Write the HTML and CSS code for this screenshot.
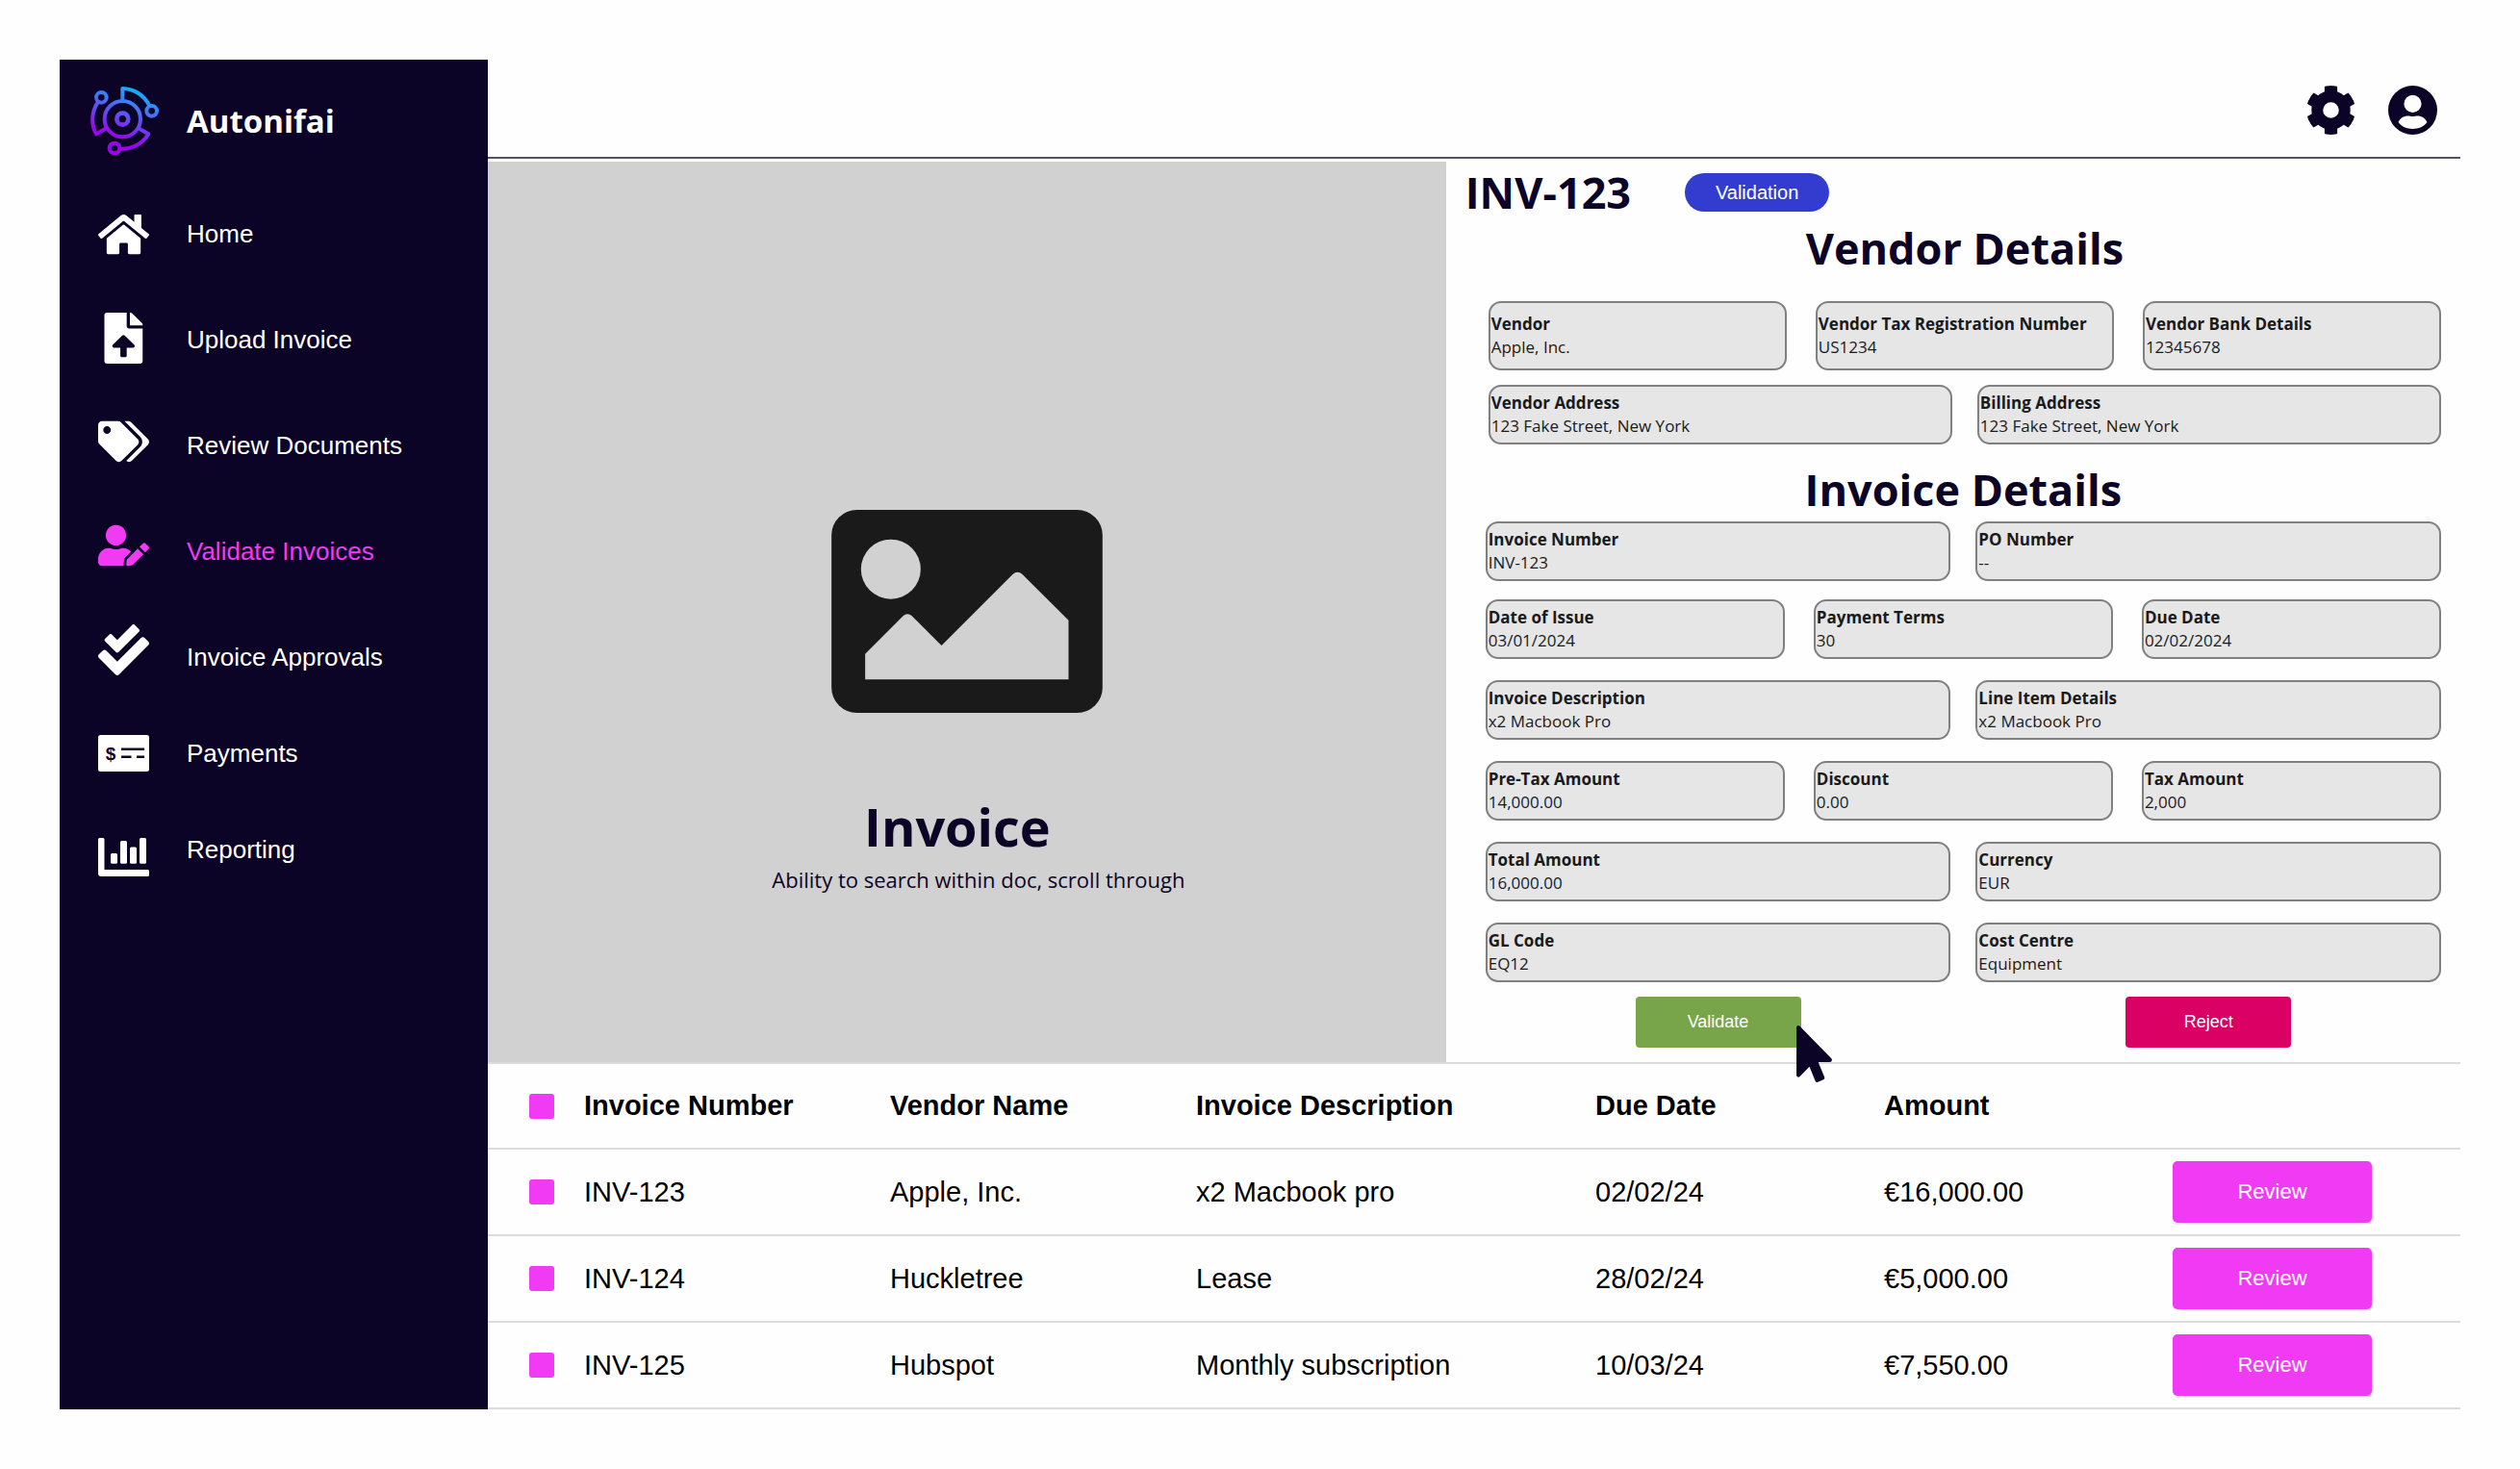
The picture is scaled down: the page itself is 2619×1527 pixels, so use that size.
FILE: index.html
```html
<!DOCTYPE html>
<html lang="en">
<head>
<meta charset="utf-8">
<meta name="viewport" content="width=device-width, initial-scale=1">
<title>Autonifai – Validate Invoices</title>
<link rel="stylesheet" href="styles.css">
</head>
<body>
<div class="shell">
  <aside class="sidebar">
    <div class="brand">
      <svg class="brand-logo" viewBox="0 0 213 213" aria-hidden="true">
        <defs>
          <linearGradient id="brand-gradient" gradientUnits="userSpaceOnUse" x1="140" y1="10" x2="85" y2="160">
            <stop offset="0" stop-color="#16aefb"/>
            <stop offset="1" stop-color="#9a05ea"/>
          </linearGradient>
        </defs>
        <g fill="none" stroke="url(#brand-gradient)" stroke-width="12" stroke-linejoin="round">
          <circle cx="100" cy="101" r="56"/>
          <circle cx="100" cy="101" r="18" stroke-width="14"/>
          <circle cx="191" cy="76" r="16"/>
          <circle cx="34" cy="34" r="16"/>
          <circle cx="75" cy="192" r="16"/>
          <path d="M100 44V6A95 95 0 0 1 184 60"/>
          <path d="M24 48A95 95 0 0 0 18 148L50 130"/>
          <path d="M152 131L181 148A95 95 0 0 1 91 194"/>
        </g>
      </svg>
      <span class="brand-name">Autonifai</span>
    </div>
    <nav aria-label="Main">
      <ul class="nav-list">
        <li><a class="nav-link" href="#">
          <svg class="nav-icon" viewBox="0 0 53 66" aria-hidden="true"><path transform="translate(0 10.1) scale(.092)" d="M280.37 148.26L96 300.11V464a16 16 0 0 0 16 16l112.06-.29a16 16 0 0 0 15.92-16V368a16 16 0 0 1 16-16h64a16 16 0 0 1 16 16v95.64a16 16 0 0 0 16 16.05L464 480a16 16 0 0 0 16-16V300L295.67 148.26a12.19 12.19 0 0 0-15.3 0zM571.6 251.47L488 182.56V38a6 6 0 0 0-6-6h-68a6 6 0 0 0-6 6v78.66L318.47 43a48 48 0 0 0-61 0L4.34 251.47a12 12 0 0 0-1.6 16.9l25.5 31A12 12 0 0 0 45.15 301l235.22-193.74a12.19 12.19 0 0 1 15.3 0L530.9 301a12 12 0 0 0 16.9-1.6l25.5-31a12 12 0 0 0-1.7-16.93z"/></svg>
          <span>Home</span></a></li>
        <li><a class="nav-link" href="#">
          <svg class="nav-icon" viewBox="0 0 53 66" aria-hidden="true"><path transform="translate(6.5 5) scale(.1035)" d="M224 136V0H24C10.7 0 0 10.7 0 24v464c0 13.3 10.7 24 24 24h336c13.3 0 24-10.7 24-24V160H248c-13.2 0-24-10.8-24-24zm65.18 216.01H224v80c0 8.84-7.16 16-16 16h-32c-8.84 0-16-7.16-16-16v-80H94.82c-14.28 0-21.41-17.29-11.27-27.36l96.42-95.7c6.65-6.61 17.39-6.61 24.04 0l96.42 95.7c10.15 10.07 3.03 27.36-11.25 27.36zM377 105L279.1 7c-4.5-4.5-10.6-7-17-7H256v128h128v-6.1c0-6.3-2.5-12.4-7-16.9z"/></svg>
          <span>Upload Invoice</span></a></li>
        <li><a class="nav-link" href="#">
          <svg class="nav-icon" viewBox="0 0 53 66" aria-hidden="true"><path transform="translate(0 7.8) scale(.0828)" d="M497.941 225.941L286.059 14.059A48 48 0 0 0 252.118 0H48C21.49 0 0 21.49 0 48v204.118a48 48 0 0 0 14.059 33.941l211.882 211.882c18.744 18.745 49.136 18.746 67.882 0l204.118-204.118c18.745-18.745 18.745-49.137 0-67.882zM112 160c-26.51 0-48-21.49-48-48s21.49-48 48-48 48 21.49 48 48-21.49 48-48 48zm513.941 133.823L421.823 497.941c-18.745 18.745-49.137 18.745-67.882 0l-.36-.36L527.64 323.522c16.999-16.999 26.36-39.6 26.36-63.64s-9.362-46.641-26.36-63.64L331.397 0h48.721a48 48 0 0 1 33.941 14.059l211.882 211.882c18.745 18.745 18.745 49.137 0 67.882z"/></svg>
          <span>Review Documents</span></a></li>
        <li><a class="nav-link nav-link-active" href="#" aria-current="page">
          <svg class="nav-icon" viewBox="0 0 53 66" aria-hidden="true"><path transform="translate(0 5.8) scale(.0828)" d="M224 256c70.7 0 128-57.3 128-128S294.7 0 224 0 96 57.3 96 128s57.3 128 128 128zm89.6 32h-16.7c-22.2 10.2-46.9 16-72.9 16s-50.6-5.8-72.9-16h-16.7C60.2 288 0 348.2 0 422.4V464c0 26.5 21.5 48 48 48h274.9c-2.4-6.8-3.4-14-2.6-21.3l6.8-60.9 1.2-11.1 7.9-7.9 77.3-77.3c-24.5-27.7-60-45.5-99.9-45.5zm45.3 145.3l-6.8 61c-1.1 10.2 7.5 18.8 17.6 17.6l60.9-6.8 137.9-137.9-71.7-71.7-137.9 137.8zM633 268.9L595.1 231c-9.3-9.3-24.5-9.3-33.8 0l-37.8 37.8-4.1 4.1 71.8 71.7 41.8-41.8c9.3-9.4 9.3-24.5 0-33.9z"/></svg>
          <span>Validate Invoices</span></a></li>
        <li><a class="nav-link" href="#">
          <svg class="nav-icon" viewBox="0 0 53 66" aria-hidden="true"><path transform="translate(0 -1) scale(.1035)" d="M505 174.8l-39.6-39.6c-9.4-9.4-24.6-9.4-33.9 0L192 374.7 80.6 263.2c-9.4-9.4-24.6-9.4-33.9 0L7 302.9c-9.4 9.4-9.4 24.6 0 34L175 505c9.4 9.4 24.6 9.4 33.9 0l296-296.2c9.4-9.5 9.4-24.7.1-34zm-324.3 106c6.2 6.3 16.4 6.3 22.6 0l208-208.2c6.2-6.3 6.2-16.4 0-22.6L366.1 4.7c-6.2-6.3-16.4-6.3-22.6 0L192 156.2l-55.4-55.5c-6.2-6.3-16.4-6.3-22.6 0L68.7 146c-6.2 6.3-6.2 16.4 0 22.6l112 112.2z"/></svg>
          <span>Invoice Approvals</span></a></li>
        <li class="nav-item-tight"><a class="nav-link" href="#">
          <svg class="nav-icon" viewBox="0 0 53 66" aria-hidden="true"><rect y="14" width="53" height="38" rx="2.5"/><path d="M24 28.7h24M24 36.7h10.5M40 36.7h8" fill="none" stroke="#0c0427" stroke-width="2.6"/><text class="nav-icon-sign" x="13" y="39.5" text-anchor="middle">$</text></svg>
          <span>Payments</span></a></li>
        <li class="nav-item-tight"><a class="nav-link" href="#">
          <svg class="nav-icon" viewBox="0 0 53 66" aria-hidden="true"><path d="M1.5 21H5a1.5 1.5 0 0 1 1.500 1.500V54h45a1.500 1.500 0 0 1 1.500 1.500v4a1.500 1.500 0 0 1-1.500 1.500H3a3 3 0 0 1-3-3V22.500A1.500 1.500 0 0 1 1.500 21z"/><rect x="13" y="37" width="7" height="10.700" rx="1.500"/><rect x="23" y="24" width="7" height="23.700" rx="1.500"/><rect x="33" y="30.500" width="7" height="17.200" rx="1.500"/><rect x="43" y="21" width="7" height="26.700" rx="1.500"/></svg>
          <span>Reporting</span></a></li>
      </ul>
    </nav>
  </aside>

  <main class="main">
    <header class="topbar">
      <button class="icon-button" type="button" aria-label="Settings">
        <svg viewBox="0 0 154 154" aria-hidden="true">
          <defs>
            <clipPath id="gear-rim"><circle cx="77" cy="77" r="77"/></clipPath>
          </defs>
          <g clip-path="url(#gear-rim)">
            <circle cx="77" cy="77" r="43" fill="none" stroke="currentColor" stroke-width="36"/>
            <path fill="currentColor" d="M57 0H97V40H57zM57 114H97V154H57z"/>
            <path fill="currentColor" transform="rotate(60 77 77)" d="M57 0H97V40H57zM57 114H97V154H57z"/>
            <path fill="currentColor" transform="rotate(120 77 77)" d="M57 0H97V40H57zM57 114H97V154H57z"/>
          </g>
        </svg>
      </button>
      <button class="icon-button" type="button" aria-label="Account">
        <svg viewBox="0 0 154 154" aria-hidden="true">
          <path fill="currentColor" fill-rule="evenodd" d="M77 0a77 77 0 1 1 0 154a77 77 0 1 1 0-154zM77 29.500a27.500 27.500 0 1 0 0 55a27.500 27.500 0 1 0 0-55zM32 115C36 103 49 95 62 95C68 95 71 97 77 97C83 97 86 95 92 95C105 95 118 103 122 115C112 129 96 136 77 136C58 136 42 129 32 115z"/>
        </svg>
      </button>
    </header>

    <div class="workspace">
      <section class="preview" aria-label="Invoice document">
        <svg class="preview-picture" viewBox="0 0 845 633" aria-hidden="true">
          <rect width="845" height="633" rx="79" fill="#1a1a1a"/>
          <circle cx="185" cy="185" r="93" fill="#d1d1d1"/>
          <path fill="#d1d1d1" d="M105 449L224 330Q237 320 250 330L343 423L565 201Q580 187 595 201L739 344V529H105z"/>
        </svg>
        <h2 class="preview-title">Invoice</h2>
        <p class="preview-note">Ability to search within doc, scroll through</p>
      </section>

      <form class="details">
        <div class="details-head">
          <h1 class="heading">INV-123</h1>
          <span class="status">Validation</span>
        </div>

        <section class="vendor">
          <h2 class="heading heading-center">Vendor Details</h2>
          <div class="fields fields-three">
            <label class="field field-tall"><span>Vendor</span><input type="text" value="Apple, Inc." readonly></label>
            <label class="field field-tall"><span>Vendor Tax Registration Number</span><input type="text" value="US1234" readonly></label>
            <label class="field field-tall"><span>Vendor Bank Details</span><input type="text" value="12345678" readonly></label>
          </div>
          <div class="fields fields-two">
            <label class="field"><span>Vendor Address</span><input type="text" value="123 Fake Street, New York" readonly></label>
            <label class="field"><span>Billing Address</span><input type="text" value="123 Fake Street, New York" readonly></label>
          </div>
        </section>

        <section class="invoice">
          <h2 class="heading heading-center">Invoice Details</h2>
          <div class="fields fields-two">
            <label class="field"><span>Invoice Number</span><input type="text" value="INV-123" readonly></label>
            <label class="field"><span>PO Number</span><input type="text" value="--" readonly></label>
          </div>
          <div class="invoice-rows">
            <div class="fields fields-three">
              <label class="field"><span>Date of Issue</span><input type="text" value="03/01/2024" readonly></label>
              <label class="field"><span>Payment Terms</span><input type="text" value="30" readonly></label>
              <label class="field"><span>Due Date</span><input type="text" value="02/02/2024" readonly></label>
            </div>
            <div class="fields fields-two">
              <label class="field"><span>Invoice Description</span><input type="text" value="x2 Macbook Pro" readonly></label>
              <label class="field"><span>Line Item Details</span><input type="text" value="x2 Macbook Pro" readonly></label>
            </div>
            <div class="fields fields-three">
              <label class="field"><span>Pre-Tax Amount</span><input type="text" value="14,000.00" readonly></label>
              <label class="field"><span>Discount</span><input type="text" value="0.00" readonly></label>
              <label class="field"><span>Tax Amount</span><input type="text" value="2,000" readonly></label>
            </div>
            <div class="fields fields-two">
              <label class="field"><span>Total Amount</span><input type="text" value="16,000.00" readonly></label>
              <label class="field"><span>Currency</span><input type="text" value="EUR" readonly></label>
            </div>
            <div class="fields fields-two">
              <label class="field"><span>GL Code</span><input type="text" value="EQ12" readonly></label>
              <label class="field"><span>Cost Centre</span><input type="text" value="Equipment" readonly></label>
            </div>
          </div>
          <div class="actions">
            <div class="action">
              <button class="decision decision-validate" type="button">Validate</button>
              <svg class="cursor" viewBox="0 0 320 512" aria-hidden="true"><path fill="#0c0427" d="M302.189 329.126H196.105l55.831 135.993c3.889 9.428-.555 19.999-9.444 23.999l-49.165 21.427c-9.165 4-19.443-.571-23.332-9.714l-53.053-129.136-86.664 89.138C18.729 472.71 0 463.554 0 447.977V18.299C0 1.899 19.921-6.096 30.277 5.443l284.412 292.542c11.472 11.179 3.007 31.141-12.5 31.141z"/></svg>
            </div>
            <div class="action">
              <button class="decision decision-reject" type="button">Reject</button>
            </div>
          </div>
        </section>
      </form>
    </div>

    <table class="invoices">
      <colgroup>
        <col class="col-check"><col class="col-number"><col class="col-vendor"><col class="col-description"><col class="col-date"><col class="col-amount"><col>
      </colgroup>
      <thead>
        <tr>
          <th class="check-cell"><input class="check" type="checkbox" aria-label="Select all invoices"></th>
          <th scope="col">Invoice Number</th>
          <th scope="col">Vendor Name</th>
          <th scope="col">Invoice Description</th>
          <th scope="col">Due Date</th>
          <th scope="col">Amount</th>
          <td></td>
        </tr>
      </thead>
      <tbody>
        <tr>
          <td class="check-cell"><input class="check" type="checkbox" aria-label="Select INV-123"></td>
          <td>INV-123</td><td>Apple, Inc.</td><td>x2 Macbook pro</td><td>02/02/24</td><td>€16,000.00</td>
          <td><button class="review" type="button">Review</button></td>
        </tr>
        <tr>
          <td class="check-cell"><input class="check" type="checkbox" aria-label="Select INV-124"></td>
          <td>INV-124</td><td>Huckletree</td><td>Lease</td><td>28/02/24</td><td>€5,000.00</td>
          <td><button class="review" type="button">Review</button></td>
        </tr>
        <tr>
          <td class="check-cell"><input class="check" type="checkbox" aria-label="Select INV-125"></td>
          <td>INV-125</td><td>Hubspot</td><td>Monthly subscription</td><td>10/03/24</td><td>€7,550.00</td>
          <td><button class="review" type="button">Review</button></td>
        </tr>
      </tbody>
    </table>
  </main>
</div>
</body>
</html>
```

FILE: styles.css
```css
:root {
  --navy: #0c0427;
  --pink: #f13af4;
  --line: #dcdcdc;
  --panel: #d1d1d1;
  --ui: "Liberation Sans", Arial, sans-serif;
  --display: "Open Sans", "Noto Sans", sans-serif;
}

* {
  box-sizing: border-box;
}

body {
  margin: 0;
  padding: 62px;
  background: #fefefe;
  font-family: var(--ui);
  color: #000;
}

h1, h2, p, ul {
  margin: 0;
  padding: 0;
}

button, input {
  font: inherit;
}

button {
  padding: 0;
  border: 0;
  cursor: pointer;
}

.shell {
  display: grid;
  grid-template-columns: 445px minmax(0, 1fr);
}

/* Sidebar */

.sidebar {
  background: var(--navy);
  color: #fff;
}

.brand {
  display: flex;
  align-items: center;
  gap: 29px;
  padding: 28px 32px 49px;
}

.brand-logo {
  width: 71px;
  height: 71px;
}

.brand-name {
  font: bold 33px/48px var(--display);
}

.nav-list {
  list-style: none;
  padding: 0 40px;
}

.nav-list li + li {
  margin-top: 44px;
}

.nav-list .nav-item-tight.nav-item-tight {
  margin-top: 34px;
}

.nav-link {
  display: flex;
  align-items: center;
  gap: 39px;
  color: inherit;
  font-size: 26px;
  text-decoration: none;
}

.nav-link-active {
  color: var(--pink);
}

.nav-icon {
  flex: none;
  width: 53px;
  height: 66px;
  fill: currentColor;
  overflow: visible;
}

.nav-icon-sign {
  fill: var(--navy);
  font: bold 19px var(--ui);
}

/* Top bar */

.topbar {
  display: flex;
  justify-content: flex-end;
  gap: 34px;
  padding: 27px 24px 23px;
  border-bottom: 2px solid #55506a;
}

.icon-button {
  width: 51px;
  height: 51px;
  background: none;
  color: var(--navy);
}

.icon-button svg {
  display: block;
}

/* Document preview and details */

.workspace {
  display: grid;
  grid-template-columns: minmax(0, 17fr) minmax(0, 18fr);
  padding-top: 3px;
}

.preview {
  display: flex;
  flex-direction: column;
  align-items: center;
  justify-content: center;
  padding-top: 187px;
  background: var(--panel);
  color: var(--navy);
}

.preview-picture {
  width: 282px;
  height: 211px;
  margin-bottom: 86px;
}

.preview-title {
  padding-right: 20px;
  font: bold 54px/64px var(--display);
}

.preview-note {
  margin-top: 7px;
  padding-left: 24px;
  font: 22px/32px var(--display);
}

.details {
  padding: 8px 20px 15px;
}

.details-head {
  display: flex;
  align-items: center;
  gap: 56px;
}

.heading {
  color: var(--navy);
  font: bold 45px/48px var(--display);
}

.heading-center {
  text-align: center;
}

.status {
  width: 150px;
  border-radius: 20px;
  background: #323dcf;
  color: #fff;
  font-size: 20px;
  line-height: 40px;
  text-align: center;
}

.vendor {
  display: grid;
  gap: 15px;
  padding: 10px 0 0 24px;
}

.vendor .heading {
  margin-bottom: 16px;
}

.invoice {
  padding: 23px 0 0 21px;
}

.invoice .heading {
  margin-bottom: 9px;
}

.invoice-rows {
  display: grid;
  gap: 22px;
  padding-top: 19px;
}

.fields {
  display: grid;
}

.fields-two {
  grid-template-columns: repeat(2, minmax(0, 1fr));
  column-gap: 26px;
}

.fields-three {
  grid-template-columns: repeat(3, minmax(0, 1fr));
  column-gap: 30px;
}

.field {
  display: flex;
  flex-direction: column;
  padding: 5px 1px;
  border: 2px solid #808080;
  border-radius: 13px;
  background: #e6e6e6;
  color: #1a1a1a;
  font: 17px/24px var(--display);
}

.field-tall {
  padding-block: 10px;
}

.field span {
  font-weight: bold;
}

.field input {
  width: 100%;
  height: 24px;
  padding: 0;
  border: 0;
  background: none;
  color: inherit;
}

.actions {
  display: grid;
  grid-template-columns: repeat(2, minmax(0, 1fr));
  column-gap: 26px;
  justify-items: center;
  padding-top: 15px;
}

.action {
  position: relative;
}

.decision {
  display: block;
  width: 172px;
  height: 53px;
  border-radius: 4px;
  color: #fff;
  font-size: 18px;
}

.decision-validate {
  background: #78a44a;
}

.decision-reject {
  background: #db0063;
}

.cursor {
  position: absolute;
  top: 30px;
  left: 167px;
  width: 37px;
  height: 59px;
}

/* Invoice table */

.invoices {
  width: 100%;
  table-layout: fixed;
  border-collapse: separate;
  border-spacing: 0;
  border-top: 2px solid var(--line);
  font-size: 29px;
  text-align: left;
}

.col-check {
  width: 100px;
}

.col-number,
.col-vendor {
  width: 318px;
}

.col-description {
  width: 415px;
}

.col-date,
.col-amount {
  width: 300px;
}

.invoices th,
.invoices td {
  height: 90px;
  padding: 0;
  border-bottom: 2px solid var(--line);
  vertical-align: middle;
}

.invoices thead th,
.invoices thead td {
  height: 89px;
}

.invoices .check-cell {
  padding-left: 43px;
}

.check {
  display: block;
  width: 26px;
  height: 26px;
  margin: 0;
  appearance: none;
  border-radius: 3px;
  background: var(--pink);
}

.review {
  display: block;
  width: 207px;
  height: 64px;
  border-radius: 5px;
  background: var(--pink);
  color: #fff;
  font-size: 22px;
}
```
